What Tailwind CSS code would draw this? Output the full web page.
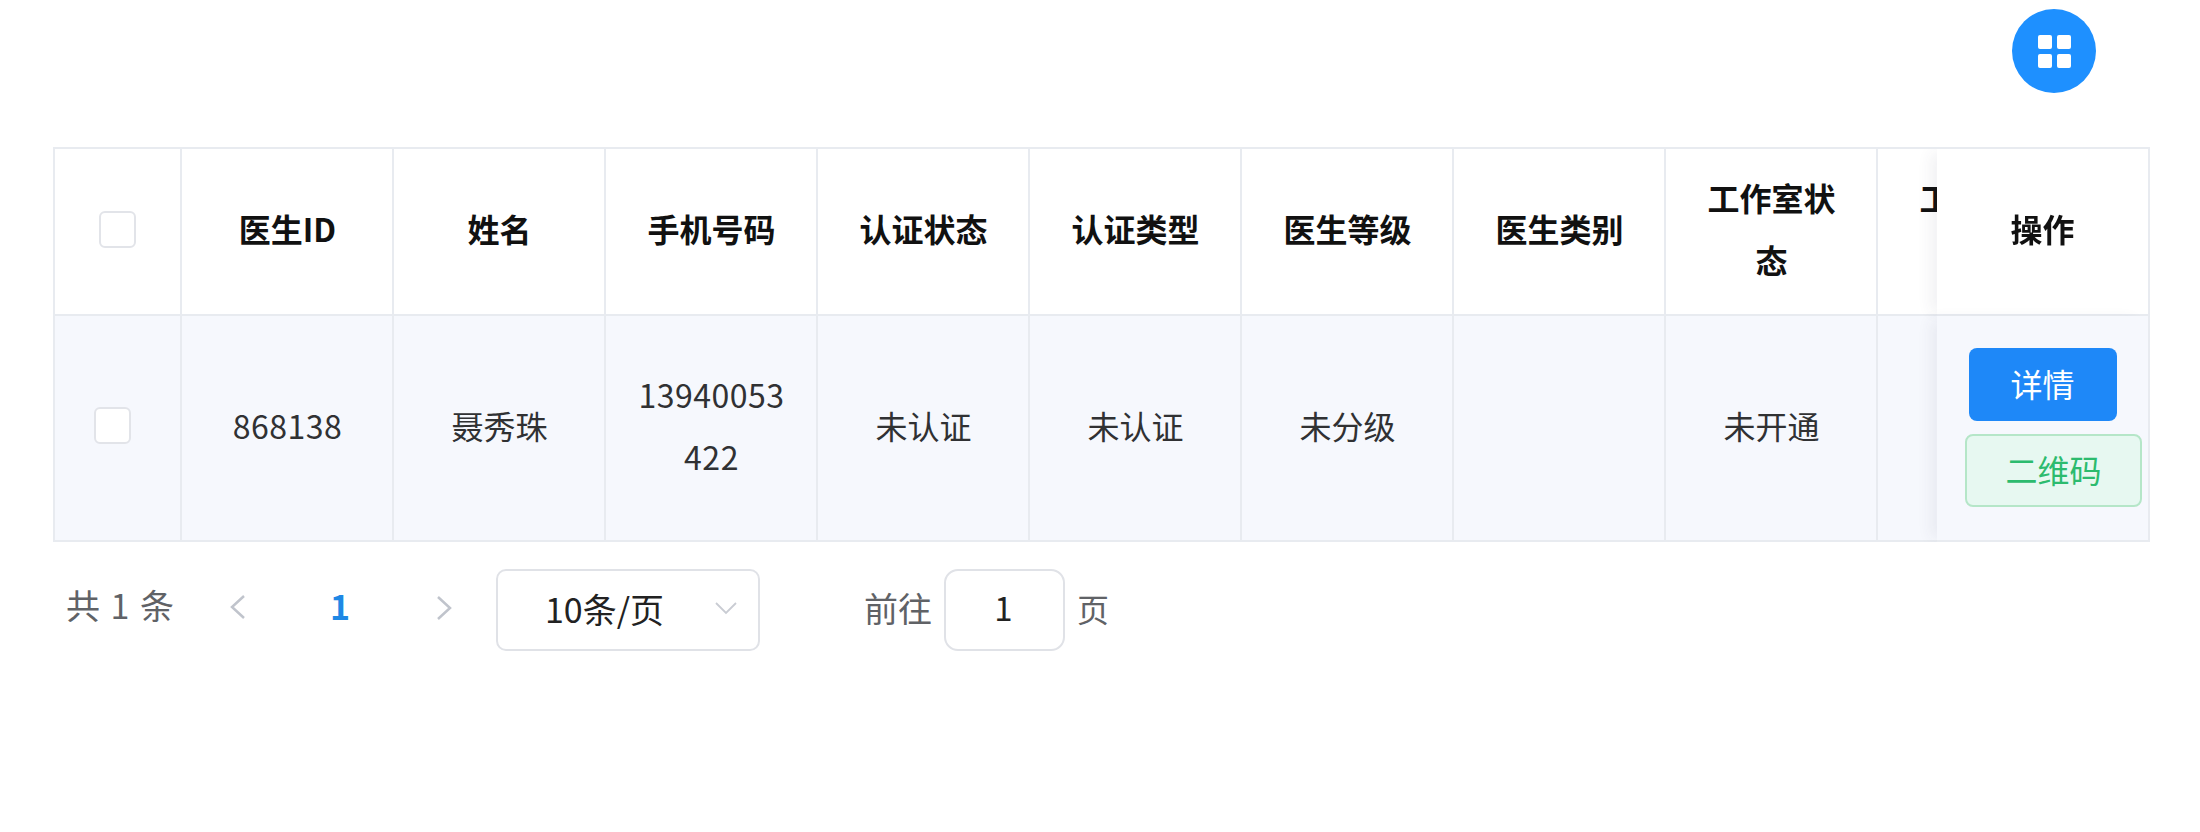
<!DOCTYPE html>
<html lang="zh">
<head>
<meta charset="utf-8">
<script src="https://cdn.jsdelivr.net/npm/@tailwindcss/browser@4"></script>
</head>
<body class="bg-white font-['Noto_Sans_CJK_SC','Noto_Sans',sans-serif] text-[32px] text-[#303133] w-[2200px] h-[832px] overflow-hidden">
  <div class="h-[147px] flex justify-end pt-[9px] pr-[104px]">
    <div class="w-[84px] h-[84px] rounded-full bg-[#1e90ff] flex items-center justify-center">
      <div class="grid grid-cols-2 gap-[5px] ml-[1px]">
        <div class="w-[14px] h-[14px] bg-white rounded-[2px]"></div>
        <div class="w-[14px] h-[14px] bg-white rounded-[2px]"></div>
        <div class="w-[14px] h-[14px] bg-white rounded-[2px]"></div>
        <div class="w-[14px] h-[14px] bg-white rounded-[2px]"></div>
      </div>
    </div>
  </div>

  <div class="ml-[53px] w-[2097px] overflow-x-hidden border-t-2 border-l-2 border-r-2 border-[#e8ebf0]">
    <table class="table-fixed border-separate border-spacing-0 w-[2246px] text-center leading-[62px]">
      <colgroup>
        <col class="w-[127px]"><col class="w-[212px]"><col class="w-[212px]"><col class="w-[212px]"><col class="w-[212px]"><col class="w-[212px]"><col class="w-[212px]"><col class="w-[212px]"><col class="w-[212px]"><col class="w-[212px]"><col class="w-[211px]">
      </colgroup>
      <thead>
        <tr class="h-[167px] font-bold text-[#111111]">
          <th class="border-r-2 border-b-2 border-[#e8ebf0] pl-[44px] bg-white"><div class="w-[37px] h-[37px] rounded-[6px] border-2 border-[#e2e4e9] bg-white -mt-[5px]"></div></th>
          <th class="border-r-2 border-b-2 border-[#e8ebf0] pl-[29px] pr-7 pb-[7px]">医生ID</th>
          <th class="border-r-2 border-b-2 border-[#e8ebf0] pl-[29px] pr-7 pb-[7px]">姓名</th>
          <th class="border-r-2 border-b-2 border-[#e8ebf0] pl-[29px] pr-7 pb-[7px]">手机号码</th>
          <th class="border-r-2 border-b-2 border-[#e8ebf0] pl-[29px] pr-7 pb-[7px]">认证状态</th>
          <th class="border-r-2 border-b-2 border-[#e8ebf0] pl-[29px] pr-7 pb-[7px]">认证类型</th>
          <th class="border-r-2 border-b-2 border-[#e8ebf0] pl-[29px] pr-7 pb-[7px]">医生等级</th>
          <th class="border-r-2 border-b-2 border-[#e8ebf0] pl-[29px] pr-7 pb-[7px]">医生类别</th>
          <th class="border-r-2 border-b-2 border-[#e8ebf0] pl-[29px] pr-7 pb-[7px]">工作室状态</th>
          <th class="border-r-2 border-b-2 border-[#e8ebf0] pl-[29px] pr-7 pb-[7px]">工作室类型</th>
          <th class="sticky right-0 bg-white border-b-2 border-[#e8ebf0] pb-[7px] shadow-[-10px_0_14px_-4px_rgba(60,50,90,0.07)]">操作</th>
        </tr>
      </thead>
      <tbody>
        <tr class="h-[226px] bg-[#f6f8fd]">
          <td class="border-r-2 border-b-2 border-[#e8ebf0] pl-[39px]"><div class="w-[37px] h-[37px] rounded-[6px] border-2 border-[#e2e4e9] bg-white -mt-[6px]"></div></td>
          <td class="border-r-2 border-b-2 border-[#e8ebf0] pl-[29px] pr-7 pb-[7px] tracking-[0.5px]">868138</td>
          <td class="border-r-2 border-b-2 border-[#e8ebf0] pl-[29px] pr-7 pb-[7px]">聂秀珠</td>
          <td class="border-r-2 border-b-2 border-[#e8ebf0] pl-[29px] pr-7 pb-[7px] break-all tracking-[0.5px]">13940053422</td>
          <td class="border-r-2 border-b-2 border-[#e8ebf0] pl-[29px] pr-7 pb-[7px]">未认证</td>
          <td class="border-r-2 border-b-2 border-[#e8ebf0] pl-[29px] pr-7 pb-[7px]">未认证</td>
          <td class="border-r-2 border-b-2 border-[#e8ebf0] pl-[29px] pr-7 pb-[7px]">未分级</td>
          <td class="border-r-2 border-b-2 border-[#e8ebf0] px-7"></td>
          <td class="border-r-2 border-b-2 border-[#e8ebf0] pl-[29px] pr-7 pb-[7px]">未开通</td>
          <td class="border-r-2 border-b-2 border-[#e8ebf0] px-7"></td>
          <td class="sticky right-0 bg-[#f6f8fd] border-b-2 border-[#e8ebf0] shadow-[-10px_0_14px_-4px_rgba(60,50,90,0.07)] leading-none">
            <div class="flex flex-col items-center -mt-[1px]">
              <button class="w-[148px] h-[73px] rounded-[8px] bg-[#1e88f8] text-white pb-[4px]">详情</button>
              <button class="mt-[13px] ml-[22px] w-[177px] h-[73px] rounded-[8px] bg-[#e7f8f1] border-2 border-[#b5e6c8] text-[#2cbb6e] pb-[4px]">二维码</button>
            </div>
          </td>
        </tr>
      </tbody>
    </table>
  </div>

  <div class="ml-[66px] mt-[27px] flex items-center h-[82px] text-[#606266]">
    <span class="w-[134px] whitespace-pre -mt-[12px] text-[34px] [word-spacing:3px]">共 1 条</span>
    <svg class="w-[76px] h-[30px] -mt-[6px]" viewBox="0 0 76 30" fill="none"><path d="M44 4 L32 15 L44 26" stroke="#c0c4cc" stroke-width="2.5"/></svg>
    <span class="w-[128px] text-center font-bold text-[34px] text-[#1e88e5] -mt-[10px]">1</span>
    <svg class="w-[80px] h-[30px] -mt-[4px]" viewBox="0 0 80 30" fill="none"><path d="M34 4 L46 15 L34 26" stroke="#c0c4cc" stroke-width="2.5"/></svg>
    <div class="ml-[12px] w-[264px] h-[82px] rounded-[10px] border-2 border-[#e0e2e7] flex items-center pl-[47px] text-[#222222] relative">
      <span class="text-[34px] -mt-[3px]">10条/页</span>
      <svg class="absolute right-[20px] top-[29px] w-[24px] h-[16px]" viewBox="0 0 24 16" fill="none"><path d="M2 3 L12 13 L22 3" stroke="#c9ccd3" stroke-width="1.8"/></svg>
    </div>
    <span class="ml-[104px] text-[34px] -mt-[5px]">前往</span>
    <div class="ml-[12px] w-[121px] h-[82px] rounded-[14px] border-2 border-[#e0e2e7] flex items-center justify-center text-[#222222] pb-[5px] pr-[2px] text-[33px]">1</div>
    <span class="ml-[12px] -mt-[5px]">页</span>
  </div>
</body>
</html>
